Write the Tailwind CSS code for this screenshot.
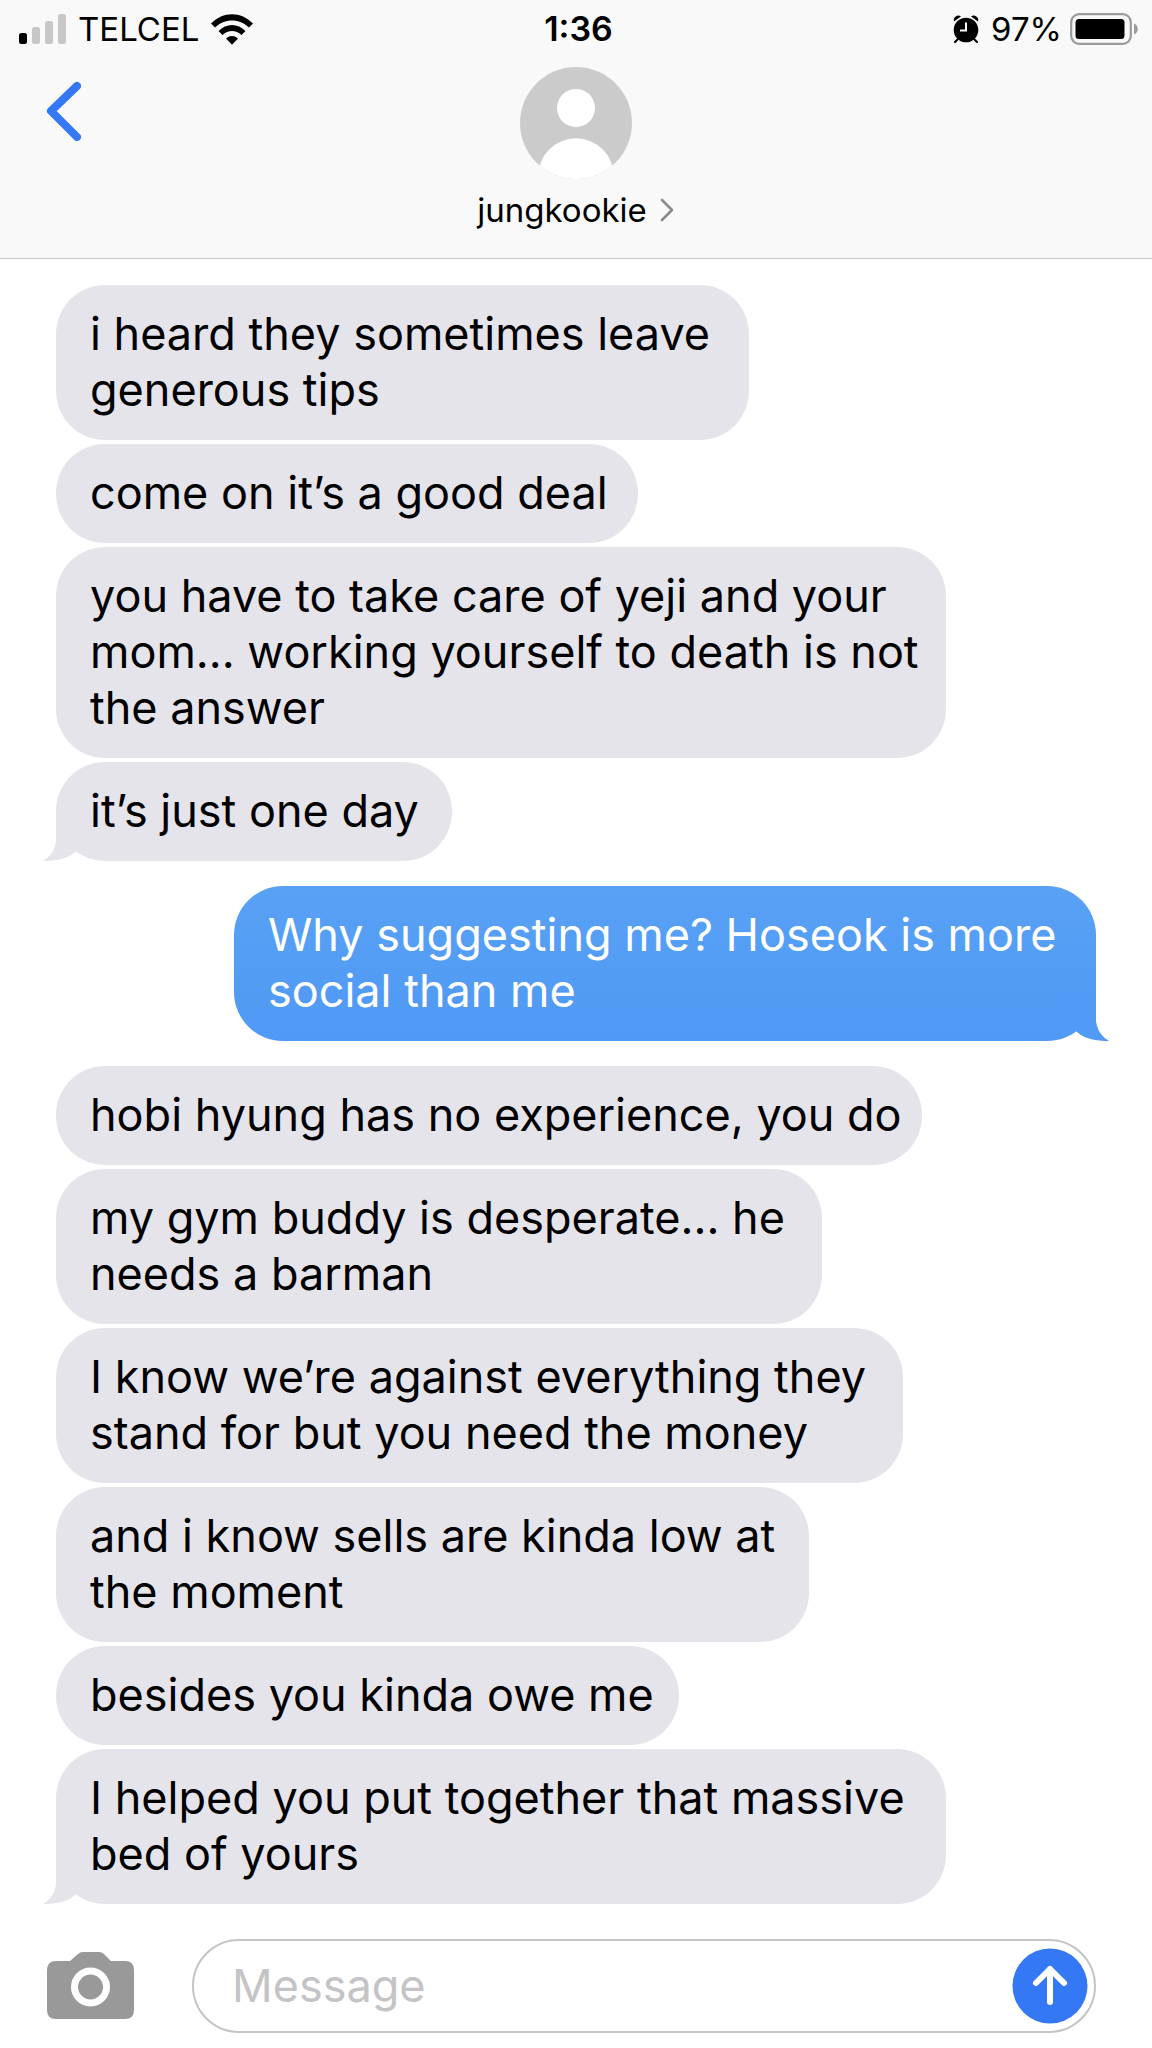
<!DOCTYPE html>
<html lang="en">
<head>
<meta charset="utf-8">
<meta name="viewport" content="width=device-width, initial-scale=1">
<title>jungkookie</title>
<script src="https://cdn.jsdelivr.net/npm/@tailwindcss/browser@4"></script>
</head>
<body class="min-h-screen bg-white font-['Inter',sans-serif] text-black flex flex-col">
<svg class="hidden" aria-hidden="true">
  <symbol id="tail" viewBox="0 0 50 50"><path d="M13 1V30C12 39 7 46 0 50C13 50 25 48 33 40L50 30V1Z"/></symbol>
</svg>

<header class="bg-[#f9f9f9] border-b border-[#c4c4c6]">
  <div class="grid grid-cols-3 items-center h-[58px] pl-[19px] pr-[14px] text-[33px] leading-[58px]">
    <div class="flex items-center gap-3">
      <svg class="w-[47px] h-[30px]" viewBox="0 0 47 30" fill="#c7c7c7" aria-label="Signal">
        <rect x="0" y="19" width="8" height="11" rx="2.5" fill="#000"/><rect x="13" y="13" width="8" height="17" rx="2.5"/><rect x="26" y="7" width="8" height="23" rx="2.5"/><rect x="39" y="0" width="8" height="30" rx="2.5"/>
      </svg>
      <span>TELCEL</span>
      <svg class="w-[42px] h-[31px]" viewBox="0 0 42 31" aria-label="Wi-Fi">
        <path d="M0 9.500C12-3 30-3 42 9.500L38 13.500C28.500 4 13.500 4 4 13.500Z"/>
        <path d="M7.500 17C15.500 9 26.500 9 34.500 17L30.500 21C25 15.700 17 15.700 11.500 21Z"/>
        <path d="M15 24.500C18.500 21.200 23.500 21.200 27 24.500L21 30.700Z"/>
      </svg>
    </div>
    <time class="text-center font-semibold text-[34px]">1:36</time>
    <div class="flex items-center justify-end">
      <svg class="w-[26px] h-[28px] mr-3" viewBox="0 0 26 28" aria-label="Alarm">
        <circle cx="13" cy="15" r="12.300"/><path d="M1 6.500A4.500 4.500 0 0 1 8 1.500ZM25 6.500A4.500 4.500 0 0 0 18 1.500Z"/>
        <path d="M5 24L2 27M21 24L24 27" stroke="#000" stroke-width="2" stroke-linecap="round"/>
        <path d="M13 7.500V15.500H7" fill="none" stroke="#f9f9f9" stroke-width="2"/>
      </svg>
      <span class="mr-2">97%</span>
      <svg class="w-[68px] h-8" viewBox="0 0 68 32" aria-label="Battery">
        <rect x="1.200" y="1.200" width="59.600" height="29.600" rx="8" fill="none" stroke="#9b9b9b" stroke-width="2.200"/>
        <rect x="5.500" y="6" width="49" height="20" rx="3.500"/><path d="M64 10.500C69 12.500 69 19.500 64 21.500Z" fill="#9b9b9b"/>
      </svg>
    </div>
  </div>
  <div class="grid grid-cols-3 items-start pt-[9px] h-[200px]">
    <button class="justify-self-start pl-[45px] pt-[14px]" aria-label="Back">
      <svg class="w-9 h-[60px]" viewBox="0 0 36 60" fill="none" stroke="#3478f6" stroke-width="8" stroke-linecap="round" stroke-linejoin="round"><path d="M32 5L6 30L32 56"/></svg>
    </button>
    <button class="flex flex-col items-center">
      <svg class="size-28" viewBox="0 0 112 112" aria-hidden="true">
        <clipPath id="face"><circle cx="56" cy="56" r="56"/></clipPath>
        <g clip-path="url(#face)"><path fill="#cbcbcb" d="M0 0H112V112H0Z"/><circle cx="56" cy="41" r="19" fill="#fff"/><circle cx="56" cy="109" r="37.700" fill="#fff"/></g>
      </svg>
      <span class="flex items-center gap-3 mt-[7px] text-[33px] leading-[48px]">jungkookie
        <svg class="w-4 h-6" viewBox="0 0 16 24" fill="none" stroke="#8a8a8e" stroke-width="2.600" stroke-linecap="round" stroke-linejoin="round"><path d="M3 2L13 12L3 22"/></svg>
      </span>
    </button>
  </div>
</header>

<main class="px-14 pt-[26px] flex flex-col gap-[25px] text-[45px] leading-[56px]">
  <section class="flex flex-col items-start gap-1 whitespace-nowrap">
    <p class="bg-[#e5e4ea] rounded-[49px] pl-[34px] pt-[21px] pb-[22px] w-[693px]">i heard they sometimes leave<br>generous tips</p>
    <p class="bg-[#e5e4ea] rounded-[49px] pl-[34px] pt-[21px] pb-[22px] w-[582px]">come on it’s a good deal</p>
    <p class="bg-[#e5e4ea] rounded-[49px] pl-[34px] pt-[21px] pb-[22px] w-[890px]">you have to take care of yeji and your<br>mom... working yourself to death is not<br>the answer</p>
    <p class="relative bg-[#e5e4ea] rounded-[49px] pl-[34px] pt-[21px] pb-[22px] w-[396px]">it’s just one day
      <svg class="absolute bottom-0 -left-[13px] size-[50px] fill-[#e5e4ea]"><use href="#tail"/></svg></p>
  </section>
  <section class="flex flex-col items-end whitespace-nowrap text-white">
    <p class="relative bg-linear-to-b from-[#58a1f5] to-[#5099f5] rounded-[49px] pl-[34px] pt-[21px] pb-[22px] w-[862px]">Why suggesting me? Hoseok is more<br>social than me
      <svg class="absolute bottom-0 -right-[13px] size-[50px] -scale-x-100 fill-[#519af5]"><use href="#tail"/></svg></p>
  </section>
  <section class="flex flex-col items-start gap-1 whitespace-nowrap">
    <p class="bg-[#e5e4ea] rounded-[49px] pl-[34px] pt-[21px] pb-[22px] w-[866px]">hobi hyung has no experience, you do</p>
    <p class="bg-[#e5e4ea] rounded-[49px] pl-[34px] pt-[21px] pb-[22px] w-[766px]">my gym buddy is desperate... he<br>needs a barman</p>
    <p class="bg-[#e5e4ea] rounded-[49px] pl-[34px] pt-[21px] pb-[22px] w-[847px]">I know we’re against everything they<br>stand for but you need the money</p>
    <p class="bg-[#e5e4ea] rounded-[49px] pl-[34px] pt-[21px] pb-[22px] w-[753px]">and i know sells are kinda low at<br>the moment</p>
    <p class="bg-[#e5e4ea] rounded-[49px] pl-[34px] pt-[21px] pb-[22px] w-[623px]">besides you kinda owe me</p>
    <p class="relative bg-[#e5e4ea] rounded-[49px] pl-[34px] pt-[21px] pb-[22px] w-[890px]">I helped you put together that massive<br>bed of yours
      <svg class="absolute bottom-0 -left-[13px] size-[50px] fill-[#e5e4ea]"><use href="#tail"/></svg></p>
  </section>
</main>

<form class="flex items-center pl-[47px] pr-14 pt-[35px] pb-3">
  <button type="button" class="mr-[58px]" aria-label="Camera">
    <svg class="w-[87px] h-[68px]" viewBox="0 0 87 68"><path fill="#999" d="M9 9H23L31 2Q33 0 36 0H52Q55 0 57 2L64 9H78Q87 9 87 18V58Q87 67 78 67H9Q0 67 0 58V18Q0 9 9 9Z"/><circle cx="43.500" cy="35" r="16" fill="none" stroke="#fff" stroke-width="7"/></svg>
  </button>
  <div class="flex flex-1 items-center h-[94px] rounded-full border-2 border-[#c4c4c7] pl-[38px] pr-[6px]">
    <input type="text" aria-label="Message" placeholder="Message" class="flex-1 min-w-0 text-[45px] leading-[56px] outline-none placeholder:text-[#c4c4c6]">
    <button type="submit" aria-label="Send">
      <svg class="size-[76px]" viewBox="0 0 76 76" fill="none" stroke="#fff" stroke-width="6" stroke-linecap="round" stroke-linejoin="round"><circle cx="38" cy="38" r="37.500" fill="#3478f6" stroke="none"/><path d="M38 54V21M24 35L38 21L52 35"/></svg>
    </button>
  </div>
</form>
</body>
</html>
